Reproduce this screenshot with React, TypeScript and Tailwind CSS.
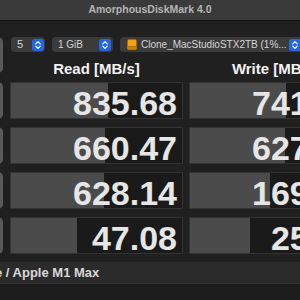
import React from 'react';

const rows = [
  { read: '835.68', readFill: 97, write: '741.92', writeFill: 96 },
  { read: '660.47', readFill: 94, write: '627.35', writeFill: 95 },
  { read: '628.14', readFill: 93, write: '169.80', writeFill: 80 },
  { read: '47.08', readFill: 66, write: '25.61', writeFill: 60 },
];

function Stepper() {
  return (
    <div className="w-[12px] h-[12px] rounded-[3px] bg-[#2468e0] flex items-center justify-center shrink-0">
      <svg width="12" height="12" viewBox="0 0 12 12" fill="none">
        <path d="M3.8 4.8 L6 2.6 L8.2 4.8" stroke="white" strokeWidth="1.2" strokeLinecap="round" strokeLinejoin="round" />
        <path d="M3.8 7.2 L6 9.4 L8.2 7.2" stroke="white" strokeWidth="1.2" strokeLinecap="round" strokeLinejoin="round" />
      </svg>
    </div>
  );
}

function DriveIcon() {
  return (
    <svg width="10" height="11" viewBox="0 0 10 11" className="shrink-0">
      <rect x="0.5" y="0.5" width="9" height="10" rx="1.2" fill="#f2a20c" />
      <rect x="0.5" y="7.5" width="9" height="3" rx="1" fill="#c98206" />
      <rect x="1" y="7.2" width="8" height="0.6" fill="#8a5a06" />
    </svg>
  );
}

function Cell({ value, fill }: { value: string; fill: number }) {
  return (
    <div
      className="w-[173px] h-[37px] shrink-0 border border-[#333333] bg-[#1a1a1a] flex items-center justify-end pt-[5px] pr-[5px]"
      style={{ backgroundImage: `linear-gradient(to right, #4b4b4b ${fill}px, transparent ${fill}px)` }}
    >
      <span className="text-[34px] leading-[34px] font-bold text-[#e6e6e6]">{value}</span>
    </div>
  );
}

export default function App() {
  return (
    <div className="w-[300px] h-[300px] overflow-hidden bg-[#202020] font-['Liberation_Sans',Arial,sans-serif]">
      {/* Title bar */}
      <div className="h-[21px] bg-[#3a3a3a] border-b border-[#131313] flex items-center justify-center">
        <span className="text-[10.5px] font-bold text-[#b5b5b5]">AmorphousDiskMark 4.0</span>
      </div>

      {/* Controls + headers */}
      <div className="flex mt-[16px] ml-[-57px]">
        <div className="w-[60px] h-[36px] mr-[7px] rounded-[5px] bg-[#5a5a5a] shrink-0" />
        <div className="flex flex-col shrink-0">
          <div className="flex gap-[7px] h-[15px] ml-[1px]">
            <div className="w-[34px] h-[15px] rounded-[4px] bg-[#3b3b3b] flex items-center justify-between pl-[6px] pr-[1px]">
              <span className="text-[11px] text-[#d6d6d6]">5</span>
              <Stepper />
            </div>
            <div className="w-[61px] h-[15px] rounded-[4px] bg-[#3b3b3b] flex items-center justify-between pl-[6px] pr-[2px]">
              <span className="text-[10px] text-[#d6d6d6]">1 GiB</span>
              <Stepper />
            </div>
            <div className="w-[182px] h-[15px] rounded-[4px] bg-[#3b3b3b] flex items-center pl-[7px] pr-[1px]">
              <DriveIcon />
              <span className="ml-[4px] flex-1 text-[10px] text-[#d6d6d6] whitespace-nowrap">Clone_MacStudioSTX2TB (1%...</span>
              <Stepper />
            </div>
          </div>
          <div className="flex gap-[6px] mt-[9px] h-[15px]">
            <div className="w-[173px] text-center text-[15px] leading-[15px] font-bold text-[#f2f2f2]">Read [MB/s]</div>
            <div className="w-[173px] text-center text-[15px] leading-[15px] font-bold text-[#f2f2f2]">Write [MB/s]</div>
          </div>
        </div>
      </div>

      {/* Result rows */}
      <div className="flex flex-col gap-[8px] mt-[6px]">
        {rows.map((r) => (
          <div key={r.read} className="flex ml-[-57px]">
            <div className="w-[60px] h-[37px] mr-[7px] rounded-[5px] bg-[#5a5a5a] shrink-0" />
            <Cell value={r.read} fill={r.readFill} />
            <div className="w-[6px] shrink-0" />
            <Cell value={r.write} fill={r.writeFill} />
          </div>
        ))}
      </div>

      {/* Comment bar */}
      <div className="mt-[8px] h-[21px] bg-[#2b2b2b] flex items-center overflow-hidden">
        <span className="ml-[-5px] text-[13px] font-bold text-[#d8d8d8] whitespace-nowrap">e / Apple M1 Max</span>
      </div>
      <div className="h-[17px] border-t border-[#2f2f2f] bg-[#1d1d1d]" />
    </div>
  );
}
